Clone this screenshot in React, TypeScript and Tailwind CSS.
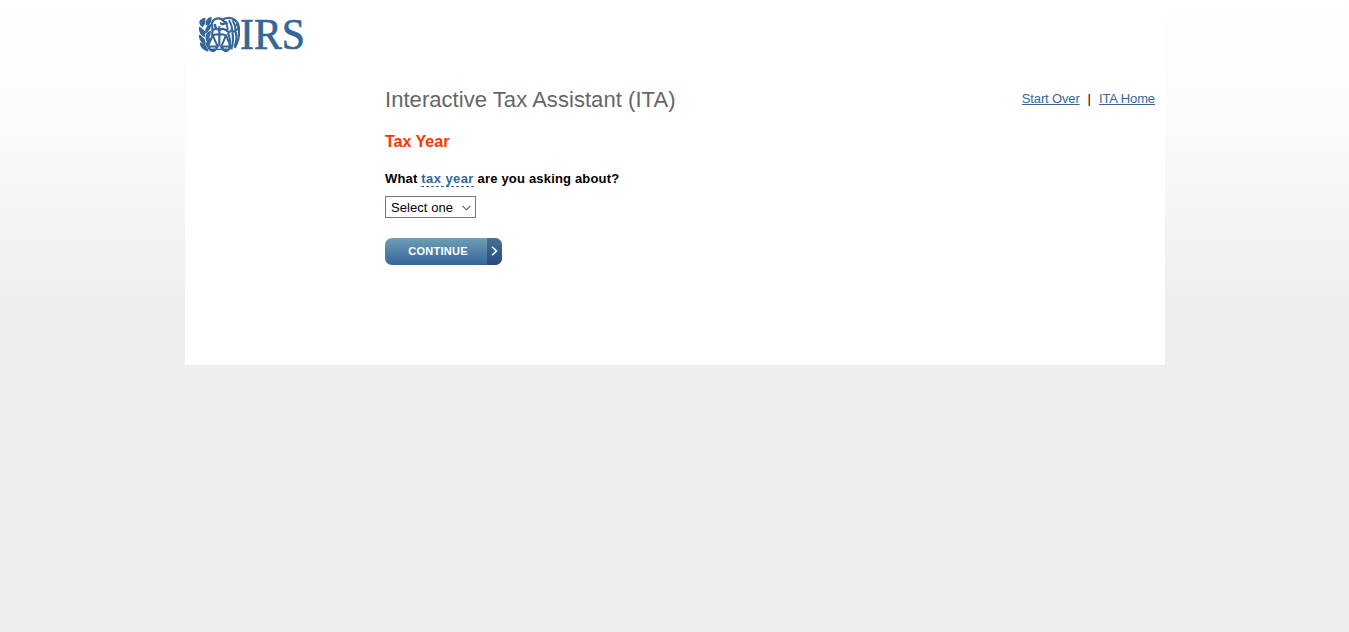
import React from "react";

function Logo() {
  return (
    <svg width="124" height="57" viewBox="0 -12 372 171" className="block" role="img" aria-label="IRS">
      <g fill="none" stroke="#336699" strokeLinecap="butt">
        {/* laurel branch */}
        <g fill="#336699" strokeWidth="5" strokeLinejoin="round">
          <path d="M12 31 Q16 22 26 20 Q27 34 20 43 Q12 37 12 31Z" />
          <path d="M31 37 Q30 23 44 17 Q46 28 36 39Z" />
          <path d="M11 47 L25 59 L25 73 Q10 64 11 47Z" />
          <path d="M30 56 Q32 43 44 39 Q42 51 30 62Z" />
          <path d="M11 71 L24 83 L27 96 Q12 88 11 71Z" />
          <path d="M31 77 Q32 63 42 59 Q42 70 32 84Z" />
          <path d="M14 94 L28 102 L35 116 Q15 109 14 94Z" />
          <path d="M32 96 Q33 85 41 79 L38 92 L34 101Z" />
        </g>
        {/* eagle head and wings */}
        <path strokeWidth="6.5" d="M49 43 Q45 27 58 21 Q74 15 82 27 L91 33 L80 37 L72 33 M49 43 L49 73 M57 36 Q56 47 63 49" />
        <path strokeWidth="6.5" d="M80 22 Q103 12 118 25 Q130 36 129 55 Q131 83 116 108" />
        <path strokeWidth="6" d="M89 28 Q96 45 94 56 M99 25 Q109 42 108 57 M110 25 Q119 41 119 57 M121 35 L129 51" />
        <path strokeWidth="6.5" d="M89 52 Q99 68 108 53 Q113 65 119 54 L127 51 M96 63 Q106 85 99 108 M109 61 Q114 84 106 112 M119 59 Q125 79 116 103" />
        {/* scales */}
        <path strokeWidth="6.5" d="M70 43 L70 101 M51 55 Q61 46 70 56 Q79 46 90 55 M47 71 Q70 62 93 71" />
        <path strokeWidth="6" d="M50 70 L36 103 M50 70 L65 103 M90 70 L76 103 M90 70 L104 103" />
        <path strokeWidth="5" fill="#336699" d="M35 103 L66 103 Q59 117 51 118 Q40 117 35 103Z M74 103 L105 103 Q98 118 89 118 Q80 116 74 103Z" />
        <path stroke="white" strokeWidth="3" d="M43 108 L58 108 M83 108 L97 108" />
        <path strokeWidth="4" d="M62 112 L78 112" />
      </g>
      <text x="132" y="110.5" textLength="195" lengthAdjust="spacingAndGlyphs" fill="#336699" stroke="#336699" strokeWidth="2" fontSize="135" fontFamily="'Liberation Serif', serif">IRS</text>
    </svg>
  );
}

export default function App() {
  return (
    <div className="min-h-screen bg-[#eeeeee] bg-[linear-gradient(to_bottom,#ffffff_0px,#fefefe_20px,#fcfcfc_100px,#eeeeee_305px)] font-['Liberation_Sans',Arial,sans-serif] text-black">
      <div className="ml-[185px] h-[365px] w-[980px] bg-white">
        <header className="h-[86px] pt-2 pl-[11px]">
          <Logo />
        </header>
        <main className="pl-[200px]">
          <div className="flex h-[26px] items-center justify-between pr-[10px]">
            <h1 className="pt-px text-[22px] leading-[26px] tracking-[0.05px] whitespace-nowrap text-[#666666]">Interactive Tax Assistant (ITA)</h1>
            <nav className="flex gap-2 text-[13px] leading-[26px] whitespace-nowrap">
              <a href="#" className="tracking-[-0.15px] text-[#336699] underline">Start Over</a>
              <span>|</span>
              <a href="#" className="tracking-[-0.1px] text-[#336699] underline">ITA Home</a>
            </nav>
          </div>
          <h2 className="mt-5 text-base leading-5 font-bold text-[#ff3300]">Tax Year</h2>
          <p className="mt-[18px] text-[13px] leading-[18px] font-bold tracking-[0.18px]">
            What <a href="#" className="border-b border-dashed border-[#336699] tracking-[0.42px] text-[#336699]">tax year</a> are you asking about?
          </p>
          <button className="mt-2 flex h-[22px] w-[91px] items-center justify-between border border-[#767676] pr-1 pl-[5px] text-[13px] leading-5">
            <span className="pt-0.5 tracking-[0.06px]">Select one</span>
            <svg width="9" height="6" viewBox="0 0 9 6" fill="none" stroke="#555555" strokeWidth="1.1" className="mt-0.5">
              <path d="M0.5 0.8 4.5 4.8 8.5 0.8" />
            </svg>
          </button>
          <button className="mt-5 flex h-[27px] w-[117px] overflow-hidden rounded-[7px] bg-linear-to-b from-[#6d9fb5] to-[#34669a] text-[11px] leading-[27px] font-bold text-white">
            <span className="w-[102px] pl-1 text-center tracking-[0.26px]">CONTINUE</span>
            <span className="flex h-full w-[15px] items-center justify-center bg-linear-to-b from-[#477294] to-[#244b80] pb-0.5">
              <svg width="7" height="10" viewBox="0 0 7 10" fill="none" stroke="white" strokeWidth="1.5">
                <path d="M1 0.7 5.5 5 1 9.3" />
              </svg>
            </span>
          </button>
        </main>
      </div>
    </div>
  );
}
